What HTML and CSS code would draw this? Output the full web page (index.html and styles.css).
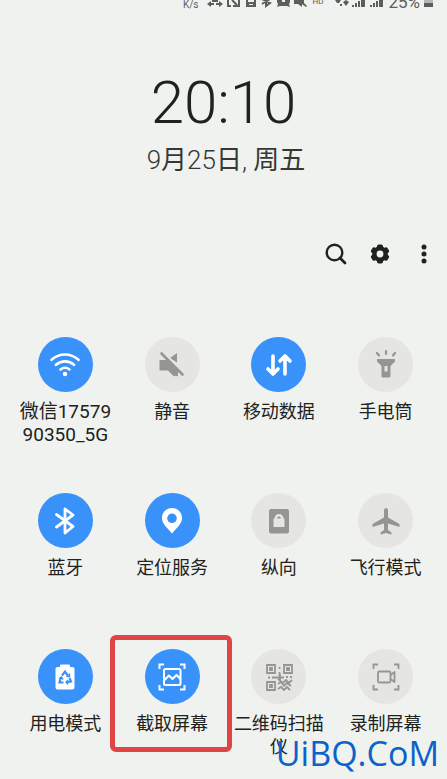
FILE: index.html
```html
<!DOCTYPE html>
<html lang="zh-CN">
<head>
<meta charset="utf-8">
<meta name="viewport" content="width=device-width, initial-scale=1">
<title>快捷设置</title>
<link rel="stylesheet" href="styles.css">
</head>
<body>
<div class="panel">
  <header class="status">
    <span class="rate">K/s</span>
    <svg class="status-icons" viewBox="0 0 100 10" aria-hidden="true">
      <path d="M0 4l4-3v2h3v2H4v2zM16 4l-4-3v2H9v2h3v2zM5 0h6v2H5z"/>
      <path d="M21 0v6h3M32 0v6h-6M25 0l5 5" fill="none" stroke="currentColor" stroke-width="2"/>
      <path d="M39 0h10v7H39z"/><path d="M41 0h6v2h-6zM42 4h4v1h-4z" fill="#f0f2ef"/>
      <path d="M55 4l8-5M55-1l8 4-4 3V-1" fill="none" stroke="currentColor" stroke-width="2"/>
      <path d="M70 0h13v2l-1 2 1 3-3-1h-7l-3 1 1-3-1-2z"/><path d="M75 0h3v2h-3z" fill="#f0f2ef"/>
      <path d="M87 0h10v3l3 3-1 1-4-3v3l-4-3h-4z"/>
    </svg>
    <span class="hd">HD</span>
    <svg class="signal-icons" viewBox="0 0 48 10" aria-hidden="true">
      <path d="M0 0h6L4 3H2zM5 4h2v2H5zM8 2l3-2 3 2-3 4z"/>
      <path d="M17 5h2v2h-2zM20 3h2v4h-2zM23 1h2v6h-2zM26 0h4v7h-4zM35 5h2v2h-2zM38 3h2v4h-2zM41 1h2v6h-2zM44 0h4v7h-4z"/>
    </svg>
    <span class="percent">25%</span>
    <svg class="battery" viewBox="0 0 9 10" aria-hidden="true"><path d="M0 0h9v3H0z" opacity=".4"/><path d="M0 3h9v4H0z"/></svg>
  </header>

  <section class="clock">
    <time class="time">20:10</time>
    <p class="date">9<b>月</b>25<b>日</b>, <b>周五</b></p>
  </section>

  <nav class="actions">
    <button class="action" aria-label="搜索"><svg viewBox="0 0 24 24"><circle cx="10.5" cy="10.5" r="7.8" fill="none" stroke="currentColor" stroke-width="2.4"/><path d="M16 16l5 5" stroke="currentColor" stroke-width="2.8" stroke-linecap="round"/></svg></button>
    <button class="action" aria-label="设置"><svg viewBox="0 0 24 24"><g fill="currentColor"><rect x="9" y="2.5" width="6" height="19" rx="1.8"/><rect x="9" y="2.5" width="6" height="19" rx="1.8" transform="rotate(60 12 12)"/><rect x="9" y="2.5" width="6" height="19" rx="1.8" transform="rotate(120 12 12)"/><circle cx="12" cy="12" r="7.8"/></g><circle cx="12" cy="12" r="3.4" fill="#f0f2ef"/></svg></button>
    <button class="action" aria-label="更多选项"><svg viewBox="0 0 24 24" fill="currentColor"><circle cx="12" cy="5" r="2.5"/><circle cx="12" cy="12" r="2.5"/><circle cx="12" cy="19" r="2.5"/></svg></button>
  </nav>

  <main class="tiles">
    <button class="tile on">
      <span class="disc"><svg viewBox="0 0 32 32" fill="none" stroke="currentColor" stroke-width="2.6" stroke-linecap="round"><path d="M2.5 10.8c8-7 19-7 27 0M7 15.8c5.5-4.6 12.5-4.6 18 0M11.5 20.5c3-2.3 6-2.3 9 0"/><circle cx="16" cy="25" r="2.2" fill="currentColor" stroke="none"/></svg></span>
      <span class="label network">微信17579<br>90350_5G</span>
    </button>
    <button class="tile">
      <span class="disc"><svg viewBox="0 0 32 32" fill="currentColor"><path d="M3.5 11h8L22 21v6.500l-2.500-1-1.500 1-6-6H3.500zM14 9l7-5v9.500z"/><path d="M7 3l21 21" stroke="#e5e6e4" stroke-width="2"/><path d="M5.500 4.500l21 21" stroke="currentColor" stroke-width="2.600" stroke-linecap="round"/></svg></span>
      <span class="label">静音</span>
    </button>
    <button class="tile on">
      <span class="disc"><svg viewBox="0 0 32 32" fill="none" stroke="currentColor" stroke-width="3.600" stroke-linecap="round" stroke-linejoin="round"><path d="M10 7v17M5 20l5 5 5-5M22 25V8M17 12l5-5 5 5"/></svg></span>
      <span class="label">移动数据</span>
    </button>
    <button class="tile">
      <span class="disc"><svg viewBox="0 0 32 32"><path fill="currentColor" fill-rule="evenodd" d="M7 10h18v2.500l-4.500 4.500v10q0 1.500-1.500 1.500h-6q-1.500 0-1.500-1.500V17L7 12.500zM14.500 17v5.500h3V17z"/><path d="M7 4l2 2.500M16 2v3M25 4l-2 2.500" stroke="currentColor" stroke-width="2.200" stroke-linecap="round"/></svg></span>
      <span class="label">手电筒</span>
    </button>

    <button class="tile on">
      <span class="disc"><svg viewBox="0 0 32 32" fill="none" stroke="currentColor" stroke-width="2.800" stroke-linejoin="round" stroke-linecap="round"><path d="M7.500 9.500l16.500 12-8 6.500V4l8 6-16.500 12"/></svg></span>
      <span class="label">蓝牙</span>
    </button>
    <button class="tile on">
      <span class="disc"><svg viewBox="0 0 32 32"><path fill="currentColor" fill-rule="evenodd" d="M16 3C10 3 6 7.500 6 13c0 6 5.500 10 10 15.500C20.500 23 26 19 26 13c0-5.500-4-10-10-10zm0 5.500a4.800 4.800 0 1 1 0 9.600 4.800 4.800 0 0 1 0-9.600z"/></svg></span>
      <span class="label">定位服务</span>
    </button>
    <button class="tile">
      <span class="disc"><svg viewBox="0 0 32 32"><rect x="6" y="4" width="20" height="24.500" rx="2" fill="currentColor"/><path d="M10.500 13.500h1q.5-4.500 4.500-4.500t4.500 4.500h1v8.500h-11z" fill="#e5e6e4"/><path d="M14.200 13.500q0-2 1.800-2t1.800 2z" fill="currentColor"/></svg></span>
      <span class="label">纵向</span>
    </button>
    <button class="tile">
      <span class="disc"><svg viewBox="0 0 32 32" fill="currentColor"><path d="M16 3q2 0 2 3v6.500l11.500 6.500v3L18 18.500V25l3.500 2.500v2L16 28l-5.500 1.500v-2L14 25v-6.500L2.500 22v-3L14 12.500V6q0-3 2-3z"/></svg></span>
      <span class="label">飞行模式</span>
    </button>

    <button class="tile on">
      <span class="disc"><svg viewBox="0 0 32 32"><path fill="currentColor" d="M8.500 6H11V4.500Q11 3.500 12 3.500h8q1 0 1 1V6h2.500q2 0 2 2v18.500q0 2-2 2h-15q-2 0-2-2V8q0-2 2-2z"/><g fill="none" stroke="#3991fa" stroke-width="2.200"><path d="M13 14.500l3-4 3.200 4.500M20.500 17l1.500 3.500-4.500.8M14.500 21.500h-4L12 16.500"/><path d="M20.500 12.500v3h-3M19 19l-2 2.200 2 2.200M10 17.500l2.500-1.500 1.500 2.500" stroke-width="1.400"/></g></svg></span>
      <span class="label">用电模式</span>
    </button>
    <button class="tile on picked">
      <span class="disc"><svg viewBox="0 0 32 32" fill="none" stroke="currentColor" stroke-width="2"><path d="M3.500 8V3.500H8M24 3.500h4.500V8M28.500 24v4.500H24M8 28.500H3.500V24"/><rect x="8" y="8" width="16.500" height="16" rx="1.500"/><path d="M8.500 19l4.500-4.500 3.500 3.500 4-4 4 4" stroke-linejoin="round"/></svg></span>
      <span class="label">截取屏幕</span>
    </button>
    <button class="tile">
      <span class="disc"><svg viewBox="0 0 32 32" fill="none" stroke="currentColor" stroke-width="1.800"><path d="M4 4h8v8H4zM21 4h8v8h-8zM4 21h8v8H4z"/><path d="M7 7h2v2H7zM24 7h2v2h-2zM7 24h2v2H7zM16.500 6v2M16.500 11v4M5 16.500h2M9 16.500h12M17 13v7M23 16h2M27 16h2M15 18l5 4 3-3 3 3 3-3M15 23l3-2 3 4 3-3 4 3M15 28l3-2 3 3 3-3 3 3"/></svg></span>
      <span class="label">二维码扫描<br>仪</span>
    </button>
    <button class="tile">
      <span class="disc"><svg viewBox="0 0 32 32" fill="none" stroke="currentColor" stroke-width="1.800"><path d="M3.500 8V3.500H8M24 3.500h4.500V8M28.500 24v4.500H24M8 28.500H3.500V24"/><rect x="8" y="10.500" width="12.500" height="11" rx="1.500"/><path d="M20.500 14l4-3v10l-4-3" stroke-linejoin="round"/></svg></span>
      <span class="label">录制屏幕</span>
    </button>
  </main>
  <div class="watermark">UiBQ.CoM</div>
</div>
</body>
</html>
```
FILE: styles.css
```css
*,
*::after {
  box-sizing: border-box;
}

body {
  margin: 0;
  background: #f0f2ef;
  color: #202220;
  font-family: Roboto, "Noto Sans CJK SC", sans-serif;
}

.panel {
  position: relative;
  min-height: 100vh;
  overflow: hidden;
}

.status {
  display: flex;
  align-items: flex-end;
  justify-content: flex-end;
  height: 10px;
  padding-right: 14px;
  overflow: hidden;
  color: #5c5e5c;
  fill: currentColor;
}

.rate {
  margin-right: 9px;
  font-size: 10px;
  line-height: 10px;
}

.status-icons {
  width: 100px;
  height: 10px;
}

.hd {
  margin: 0 12px 4px 5px;
  font-size: 8px;
  line-height: 8px;
}

.signal-icons {
  width: 48px;
  height: 10px;
}

.percent {
  margin: 0 4px 0 5px;
  font-size: 17px;
  line-height: 16px;
}

.battery {
  width: 9px;
  height: 10px;
}

.clock {
  padding-top: 61px;
  text-align: center;
}

.time {
  display: block;
  font-size: 60px;
  font-weight: 300;
  line-height: 64px;
}

.date {
  margin: 7px 0 0;
  padding-left: 5px;
  font-size: 26px;
  font-weight: 300;
  line-height: 36px;
  color: #363836;
}

.date b {
  font-weight: 400;
}

.actions {
  display: flex;
  justify-content: flex-end;
  gap: 20px;
  margin-top: 64px;
  padding-right: 11px;
}

.action {
  width: 24px;
  height: 24px;
  padding: 0;
  border: 0;
  background: none;
  color: #202220;
}

.action svg {
  display: block;
  width: 24px;
  height: 24px;
}

.tiles {
  display: grid;
  grid-template-columns: repeat(4, 1fr);
  grid-auto-rows: minmax(109px, auto);
  row-gap: 47px;
  padding: 71px 8px 0 12px;
}

.tile {
  display: flex;
  flex-direction: column;
  align-items: center;
  position: relative;
  padding: 0;
  border: 0;
  background: none;
  color: #202220;
  font: inherit;
  font-size: 18px;
  line-height: 23px;
}

.disc {
  display: grid;
  place-items: center;
  width: 55px;
  height: 55px;
  margin-bottom: 8px;
  border-radius: 50%;
  background: #e5e6e4;
  color: #949694;
}

.on .disc {
  background: #3991fa;
  color: #fff;
}

.disc svg {
  width: 32px;
  height: 32px;
}

.label {
  white-space: nowrap;
}

.network {
  font-size: 19px;
}

.picked::after {
  content: "";
  position: absolute;
  top: -14px;
  right: -6px;
  left: -9px;
  height: 117px;
  border: 5px solid #e04444;
  border-radius: 6px;
}

.watermark {
  position: absolute;
  right: 8px;
  bottom: 8px;
  color: #0a63c9;
  font-family: "Open Sans", sans-serif;
  font-size: 34px;
  font-weight: 500;
  line-height: 36px;
}
```
